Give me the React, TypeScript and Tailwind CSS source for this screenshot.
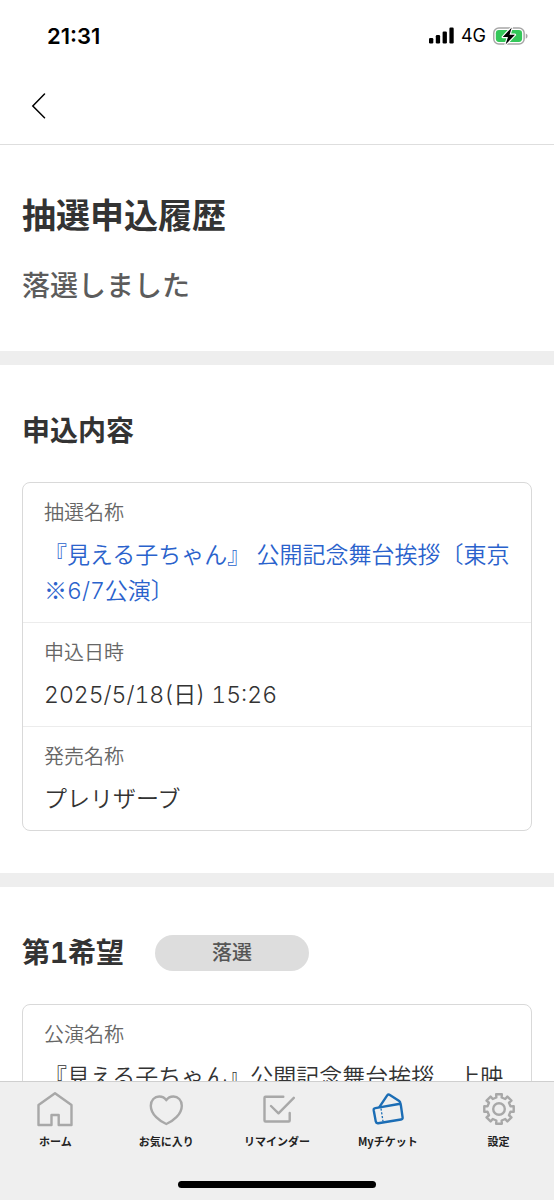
import type { ReactNode } from "react";

type IconProps = { children: ReactNode; className: string };

function TabIcon({ children, className }: IconProps) {
  return (
    <svg
      viewBox="0 0 36 36"
      className={`h-9 w-9 ${className}`}
      fill="none"
      stroke="currentColor"
      strokeWidth="2.4"
      strokeLinecap="round"
      strokeLinejoin="round"
      aria-hidden="true"
    >
      {children}
    </svg>
  );
}

function gearPath() {
  const points: string[] = [];
  for (let i = 0; i < 8; i++) {
    const base = i * 45 - 90;
    const corners: [number, number][] = [
      [-13, 11.8],
      [-11, 15],
      [11, 15],
      [13, 11.8],
    ];
    for (const [offset, r] of corners) {
      const a = ((base + offset) * Math.PI) / 180;
      points.push(`${(18 + r * Math.cos(a)).toFixed(2)} ${(18 + r * Math.sin(a)).toFixed(2)}`);
    }
  }
  return `M${points.join("L")}Z`;
}

const tabs = [
  {
    label: "ホーム",
    icon: <path d="M1.5 34V14L18 2.2L34.5 14V34H21.7V24H14.5V34Z" />,
  },
  {
    label: "お気に入り",
    icon: (
      <path d="M18.3 33C12 30.5 2.8 23.5 2.8 14.7C2.8 9 6.7 5.5 11.2 5.5C14.3 5.5 16.9 7 18.3 9.2C19.7 7 22.3 5.5 25.4 5.5C29.9 5.5 33.8 9 33.8 14.7C33.8 23.5 24.6 30.5 18.3 33Z" />
    ),
  },
  {
    label: "リマインダー",
    icon: (
      <>
        <path d="M24.3 5.7H6.5Q5.5 5.7 5.5 6.7V29.5Q5.5 30.5 6.5 30.5H29.7Q30.7 30.5 30.7 29.5V22" />
        <path d="M12 15L19.5 22.3L34.8 6.8" />
      </>
    ),
  },
  {
    label: "Myチケット",
    active: true,
    icon: (
      <>
        <path d="M5.3 17.1L28.8 13Q30.6 12.7 30.9 14.5L32.6 26.3Q32.9 28.2 31 28.5L8.2 32.2Q6.2 32.5 5.8 30.6L3.7 19.3Q3.4 17.4 5.3 17.1Z" />
        <path d="M9.5 15.8L17.2 4.4Q18.3 2.9 19.9 3.9L29.2 10Q30.3 10.8 30.5 12.8" />
        <path d="M11 17.5L13 30.3" strokeWidth="1.3" strokeDasharray="2.2 1.6" strokeLinecap="butt" />
      </>
    ),
  },
  {
    label: "設定",
    icon: (
      <>
        <path d={gearPath()} />
        <circle cx="18" cy="18" r="5.8" />
      </>
    ),
  },
];

function StatusBar() {
  return (
    <div className="flex h-[71px] shrink-0 items-center justify-between pr-[26px] pl-[47px] text-black">
      <span className="text-[22px] leading-7 font-semibold">21:31</span>
      <div className="flex items-center gap-[7px]">
        <svg viewBox="0 0 25 17" className="h-[17px] w-[25px]" fill="currentColor" aria-hidden="true">
          <rect x="0" y="11" width="4.3" height="5.5" rx="1.2" />
          <rect x="6.8" y="8" width="4.3" height="8.5" rx="1.2" />
          <rect x="13.6" y="4.5" width="4.3" height="12" rx="1.2" />
          <rect x="20.4" y="0.5" width="4.3" height="16" rx="1.2" />
        </svg>
        <span className="text-[18px] leading-6">4G</span>
        <svg viewBox="0 0 36 20" className="h-5 w-[35px]" aria-hidden="true">
          <rect x="0.8" y="1.8" width="31.2" height="16.4" rx="5.2" fill="none" stroke="#a6a6a6" strokeWidth="1.5" />
          <path d="M33.7 7.3Q35.6 8 35.6 10Q35.6 12 33.7 12.7Z" fill="#a6a6a6" />
          <rect x="2.9" y="3.9" width="27" height="12.2" rx="3.2" fill="#34c759" />
          <path
            d="M19.3 1.2L10 11H15.4L12.9 18.8L22.6 8.7H17Z"
            fill="#000"
            stroke="#fff"
            strokeWidth="2.4"
            strokeLinejoin="round"
            paintOrder="stroke"
          />
        </svg>
      </div>
    </div>
  );
}

function Row({ label, children }: { label: string; children: ReactNode }) {
  return (
    <div className="border-b border-[#ececec] pt-4 pr-4 pb-[13px] pl-[21px] last:border-b-0">
      <dt className="text-[20px] leading-7 text-[#666]">{label}</dt>
      <dd className="mt-[10px] text-[23px] leading-9 text-[#333]">{children}</dd>
    </div>
  );
}

function Card({ children }: { children: ReactNode }) {
  return <dl className="mt-[33px] rounded-lg border border-[#d9d9d9] font-[350]">{children}</dl>;
}

export default function App() {
  return (
    <div
      lang="ja"
      className="flex h-dvh flex-col overflow-hidden bg-white font-['Inter','Noto_Sans_CJK_JP',sans-serif] text-[#333]"
    >
      <StatusBar />
      <header className="flex h-[74px] shrink-0 items-center border-b border-[#dedede] px-[21px] pb-1">
        <button type="button" aria-label="戻る" className="flex h-10 w-9 items-center justify-center text-black">
          <svg
            viewBox="0 0 16 26"
            className="h-[26px] w-4"
            fill="none"
            stroke="currentColor"
            strokeWidth="1.5"
            strokeLinecap="round"
            aria-hidden="true"
          >
            <path d="M13.5 1L1.8 13L13.5 24.8" />
          </svg>
        </button>
      </header>

      <main className="min-h-0 flex-1 overflow-y-auto tabular-nums [scrollbar-width:none]">
        <section className="px-[22px] pt-[49px] pb-[47px]">
          <h1 className="text-[34px] leading-[44px] font-bold">抽選申込履歴</h1>
          <p className="mt-[30px] text-[28px] leading-9 font-medium text-[#5c5c5c]">落選しました</p>
        </section>

        <section className="border-t-[14px] border-[#eee] px-[22px] pt-12 pb-[42px]">
          <h2 className="text-[28px] leading-9 font-bold">申込内容</h2>
          <Card>
            <Row label="抽選名称">
              <a href="#event" className="text-[#2a62cc]">
                『見える子ちゃん』 公開記念舞台挨拶〔東京
                <span className="font-['Noto_Sans_CJK_JP',sans-serif] leading-none">※</span>6/7公演〕
              </a>
            </Row>
            <Row label="申込日時">2025/5/18(日) 15:26</Row>
            <Row label="発売名称">プレリザーブ</Row>
          </Card>
        </section>

        <section className="border-t-[14px] border-[#eee] px-[22px] pt-12 pb-12">
          <div className="flex items-center gap-[31px]">
            <h2 className="text-[28px] leading-9 font-bold">第1希望</h2>
            <span className="w-[154px] rounded-full bg-[#ddd] text-center text-[20px] leading-9 font-medium text-[#555]">
              落選
            </span>
          </div>
          <Card>
            <Row label="公演名称">『見える子ちゃん』公開記念舞台挨拶　上映</Row>
          </Card>
        </section>
      </main>

      <nav className="shrink-0 border-t border-[#cfcfcf] bg-[#efefef] pt-[9px] pb-3 font-['Noto_Sans_CJK_JP',sans-serif]">
        <ul className="grid grid-cols-5">
          {tabs.map((tab) => (
            <li key={tab.label}>
              <a
                href="#tab"
                aria-current={tab.active ? "page" : undefined}
                className="flex flex-col items-center gap-[6px] text-[11px] leading-4 font-bold text-[#222]"
              >
                <TabIcon className={tab.active ? "text-[#1b6db5]" : "text-[#a8a8a8]"}>{tab.icon}</TabIcon>
                {tab.label}
              </a>
            </li>
          ))}
        </ul>
        <div className="mx-auto mt-8 h-[7px] w-[198px] rounded-full bg-black" />
      </nav>
    </div>
  );
}
